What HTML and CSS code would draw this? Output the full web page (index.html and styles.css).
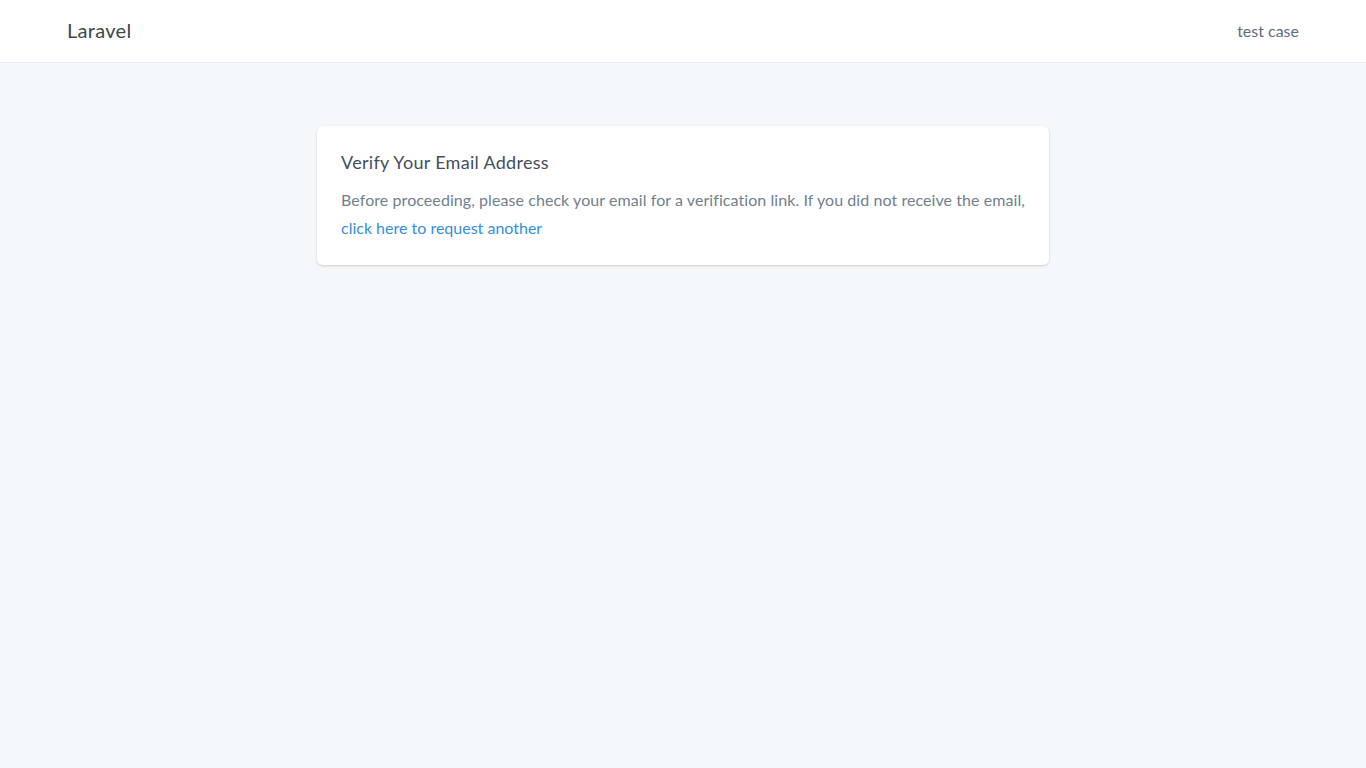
FILE: index.html
```html
<!DOCTYPE html>
<html lang="en">
<head>
<meta charset="utf-8">
<title>Laravel</title>
<link rel="stylesheet" href="styles.css">
</head>
<body>
<header class="navbar">
  <div class="container nav-inner">
    <a class="brand" href="#">Laravel</a>
    <span class="user">test case</span>
  </div>
</header>
<main class="main">
  <div class="card">
    <h1 class="card-title">Verify Your Email Address</h1>
    <p class="card-text">Before proceeding, please check your email for a verification link. If you did not receive the email, <a class="link" href="#">click here to request another</a></p>
  </div>
</main>
</body>
</html>
```
FILE: styles.css
```css
* { box-sizing: border-box; }
html, body { margin: 0; padding: 0; }
body {
  background: #f5f8fa;
  font-family: "Lato", "Noto Sans", sans-serif;
  color: #3d4852;
  min-height: 100vh;
}
.navbar {
  background: #fff;
  border-bottom: 1px solid #e6eaee;
  height: 63px;
}
.container {
  max-width: 1280px;
  margin: 0 auto;
  padding: 0 24px;
}
.nav-inner {
  height: 62px;
  display: flex;
  align-items: center;
  justify-content: space-between;
}
.brand {
  font-size: 20px;
  letter-spacing: 0.3px;
  color: #3d4852;
  text-decoration: none;
  padding-bottom: 2px;
}
.user {
  font-size: 16px;
  color: #5f6e7c;
  padding-bottom: 2px;
}
.main {
  padding-top: 63px;
}
.card {
  width: 732px;
  margin: 0 auto;
  background: #fff;
  border-radius: 6px;
  box-shadow: 0 1px 3px rgba(0,0,0,0.12), 0 1px 2px rgba(0,0,0,0.06);
  padding: 24px 24px 23px;
}
.card-title {
  margin: 0 0 12px;
  font-size: 18px;
  font-weight: 400;
  line-height: 24px;
  letter-spacing: 0.3px;
  color: #444f5c;
}
.card-text {
  margin: 0;
  font-size: 16px;
  line-height: 28px;
  letter-spacing: 0.07px;
  color: #717f8e;
}
.link {
  color: #3490dc;
  letter-spacing: 0;
  text-decoration: none;
}
```
